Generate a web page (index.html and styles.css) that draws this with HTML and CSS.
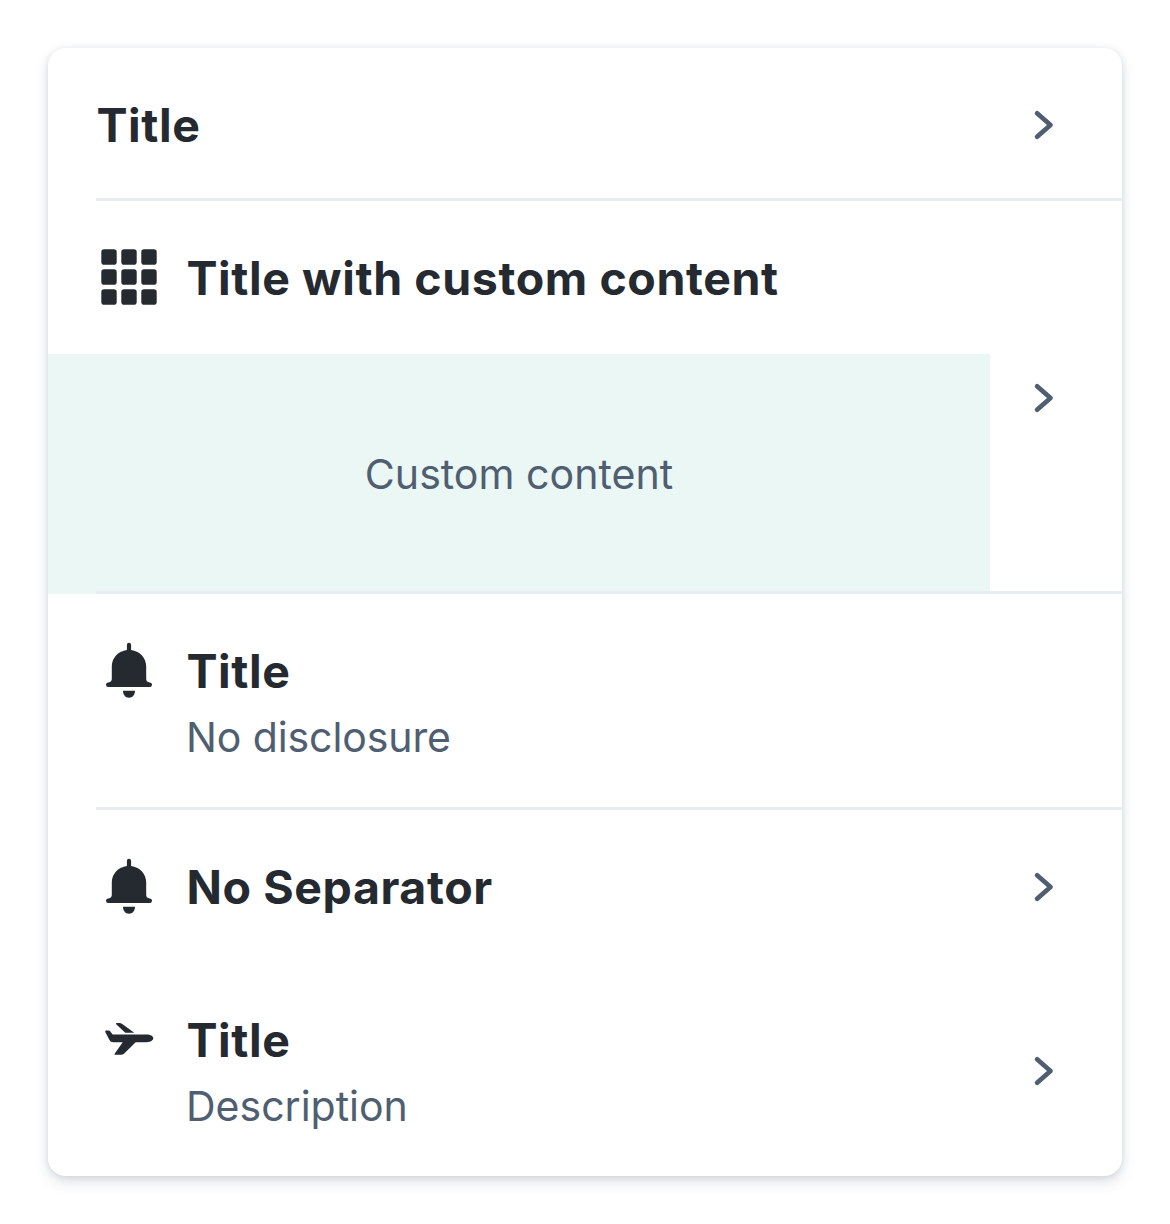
FILE: index.html
```html
<!DOCTYPE html>
<html lang="en">
<head>
<meta charset="utf-8">
<title>List choice</title>
<link rel="stylesheet" href="styles.css">
</head>
<body>
<svg class="defs" width="0" height="0" aria-hidden="true">
  <symbol id="chevron" viewBox="0 0 30 36"><path d="M8.100 6.200 21.500 17.900 8.100 29.700"/></symbol>
  <symbol id="bell" viewBox="0 0 66 66"><path d="M30.900 13V7.800a2.100 2.100 0 0 1 4.200 0V13C43.500 14 50.200 20.700 50.200 29.500V41.500C50.200 43.500 51 45.300 53.700 45.500A2.300 2.300 0 0 1 53.700 50.100H12.300A2.300 2.300 0 0 1 12.300 45.500C15 45.300 15.800 43.500 15.800 41.500V29.500C15.800 20.700 22.500 14 30.900 13ZM27 53.700H39C39 57.900 36.500 60.700 33 60.700S27 57.900 27 53.700Z"/></symbol>
</svg>
<main class="card">
  <section class="row">
    <div class="body"><div class="head"><h2 class="title">Title</h2></div></div>
    <svg class="chevron"><use href="#chevron"/></svg>
  </section>
  <section class="row">
    <div class="body">
      <div class="head">
        <svg class="icon" viewBox="0 0 66 66">
          <g><rect x="5.300" y="5.300" width="15.400" height="15.400" rx="2.800"/><rect x="25.300" y="5.300" width="15.400" height="15.400" rx="2.800"/><rect x="45.300" y="5.300" width="15.400" height="15.400" rx="2.800"/></g>
          <g><rect x="5.300" y="25.300" width="15.400" height="15.400" rx="2.800"/><rect x="25.300" y="25.300" width="15.400" height="15.400" rx="2.800"/><rect x="45.300" y="25.300" width="15.400" height="15.400" rx="2.800"/></g>
          <g><rect x="5.300" y="45.300" width="15.400" height="15.400" rx="2.800"/><rect x="25.300" y="45.300" width="15.400" height="15.400" rx="2.800"/><rect x="45.300" y="45.300" width="15.400" height="15.400" rx="2.800"/></g>
        </svg>
        <h2 class="title">Title with custom content</h2>
      </div>
      <div class="custom"><span>Custom content</span></div>
    </div>
    <svg class="chevron"><use href="#chevron"/></svg>
  </section>
  <section class="row">
    <div class="body"><div class="head">
      <svg class="icon"><use href="#bell"/></svg>
      <div><h2 class="title">Title</h2><p class="description tight">No disclosure</p></div>
    </div></div>
  </section>
  <section class="row plain">
    <div class="body"><div class="head">
      <svg class="icon"><use href="#bell"/></svg>
      <h2 class="title">No Separator</h2>
    </div></div>
    <svg class="chevron"><use href="#chevron"/></svg>
  </section>
  <section class="row plain">
    <div class="body"><div class="head">
      <svg class="icon" viewBox="0 0 66 66"><path d="M10 24.500H12.400Q13.600 24.500 14.300 25.500L16.700 28.600H50.500C54.700 28.600 57.300 30.300 57.300 32.300S54.700 36.200 50.500 36.200H39.700L28.200 47.400Q26.900 48.800 25 48.800H19.600Q17.700 48.800 19 47.300L26.700 36.200H17.300Q14.500 36.200 13.300 33.700L9.300 25.900Q8.900 24.500 10 24.500ZM20.700 17H23.500Q24.800 17 25.900 17.800L38.300 26.700H29.300L20.400 18.400Q19.300 17.100 20.700 17Z"/></svg>
      <div><h2 class="title">Title</h2><p class="description">Description</p></div>
    </div></div>
    <svg class="chevron"><use href="#chevron"/></svg>
  </section>
</main>
</body>
</html>
```

FILE: styles.css
```css
* { box-sizing: border-box; }

body {
  margin: 0;
  padding: 48px;
  background: #fff;
  font-family: Inter, "Liberation Sans", sans-serif;
  color: #252a31;
}

.defs { display: block; }

.card {
  width: 1074px;
  height: 1128px;
  border-radius: 18px;
  overflow: hidden;
  background: #fff;
  box-shadow: 0 1px 6px rgba(79, 94, 113, .14), 0 6px 14px rgba(79, 94, 113, .18);
}

.row {
  display: flex;
  align-items: center;
  min-height: 153px;
  background: linear-gradient(#e8edf1, #e8edf1) 48px 100% / 100% 3px no-repeat;
}

.row.plain { background: none; }

.body {
  flex: 1;
  align-self: stretch;
}

.head {
  display: flex;
  align-items: flex-start;
  gap: 24px;
  padding: 47px 0 46px 48px;
}

.icon {
  flex: none;
  width: 66px;
  height: 66px;
  margin: -4px 0 -6px;
  fill: #252a31;
}

.title {
  margin: 0;
  padding-left: .4px;
  font-size: 46.500px;
  font-weight: 700;
  letter-spacing: .6px;
  line-height: 60px;
  white-space: nowrap;
}

.description {
  margin: 9px 0 0;
  color: #4f5e71;
  font-size: 41px;
  line-height: 54px;
}

.description.tight { letter-spacing: -.1px; }

.chevron {
  flex: none;
  width: 30px;
  height: 36px;
  margin: 0 63px 0 39px;
  fill: none;
  stroke: #4f5e71;
  stroke-width: 4.700;
  stroke-linecap: round;
  stroke-linejoin: round;
}

.custom {
  display: flex;
  align-items: center;
  justify-content: center;
  height: 240px;
  background: linear-gradient(#e8edf1, #e8edf1) 48px 100% / 100% 3px no-repeat #ebf7f5;
  color: #4f5e71;
  font-size: 41.100px;
}
```
